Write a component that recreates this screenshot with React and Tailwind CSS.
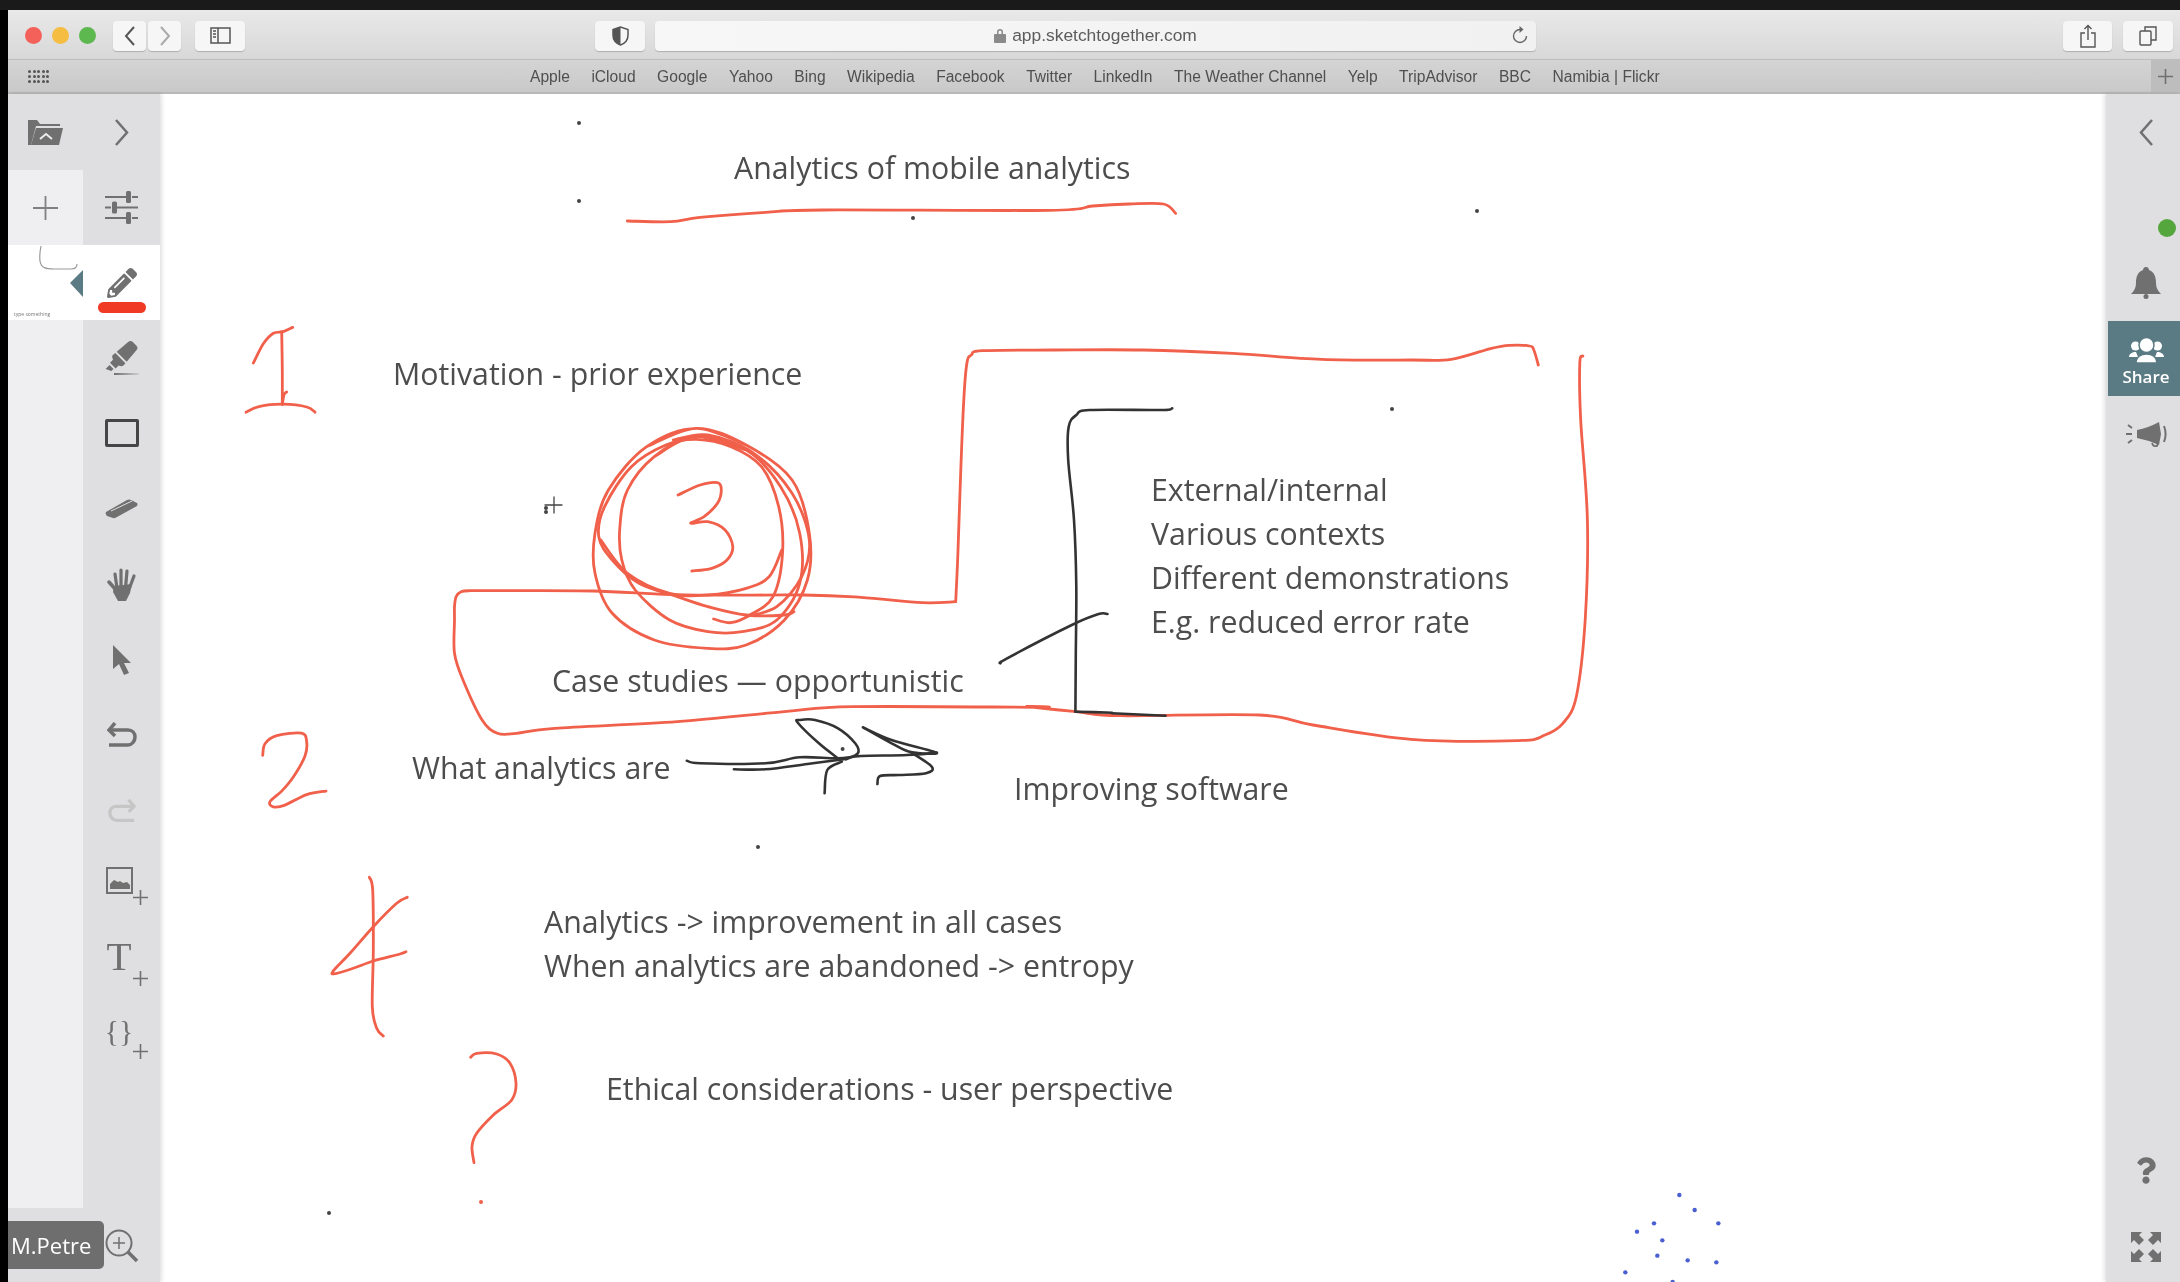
import { FaHighlighter, FaPencilAlt, FaQuestion } from "react-icons/fa"

const bookmarks = ["Apple", "iCloud", "Google", "Yahoo", "Bing", "Wikipedia", "Facebook", "Twitter", "LinkedIn", "The Weather Channel", "Yelp", "TripAdvisor", "BBC", "Namibia | Flickr"]

// the crops the strokes were read from have their own scale
const z5 = pts => pts.map(([x, y]) => [440 + x / 2.613, 320 + y / 3])
const z6 = pts => pts.map(([x, y]) => [920 + x / 2.24, 320 + y / 3])
const z8 = pts => pts.map(([x, y]) => [220 + x / 3, 300 + y / 2.851])
const z9 = pts => pts.map(([x, y]) => [300 + x / 3, 850 + y / 3])
const z11 = pts => pts.map(([x, y]) => [620 + x / 2.75, 130 + y / 3])

// catmull-rom through the points
function smooth(pts) {
  let d = `M${pts[0][0].toFixed(1)} ${pts[0][1].toFixed(1)}`
  for (let i = 0; i < pts.length - 1; i++) {
    const p0 = pts[i - 1] || pts[i]
    const p1 = pts[i]
    const p2 = pts[i + 1]
    const p3 = pts[i + 2] || p2
    const c1x = p1[0] + (p2[0] - p0[0]) / 6
    const c1y = p1[1] + (p2[1] - p0[1]) / 6
    const c2x = p2[0] - (p3[0] - p1[0]) / 6
    const c2y = p2[1] - (p3[1] - p1[1]) / 6
    d += `C${c1x.toFixed(1)} ${c1y.toFixed(1)} ${c2x.toFixed(1)} ${c2y.toFixed(1)} ${p2[0].toFixed(1)} ${p2[1].toFixed(1)}`
  }
  return d
}

const redStrokes = [
  z11([[20, 273], [140, 275], [220, 262], [400, 247], [560, 240], [1180, 241], [1300, 228], [1400, 222], [1495, 222], [1528, 250]]),
  // the big outline, broken at its one sharp corner
  z6([[1385, 135], [1375, 90], [1365, 78], [1320, 76], [1280, 85], [1190, 118], [1100, 120], [900, 118], [700, 100], [500, 90], [300, 90], [140, 92], [115, 105], [105, 130], [98, 240], [90, 500], [85, 700], [80, 845]]),
  [...z6([[80, 845]]),
    ...z5([[1260, 848], [1100, 832], [950, 825], [640, 825], [400, 813], [150, 812], [80, 812], [55, 815], [42, 830], [38, 860], [38, 900], [38, 1000], [60, 1080], [110, 1200], [150, 1240], [200, 1240], [300, 1225], [620, 1205], [900, 1175], [1080, 1160], [1568, 1162]]),
    ...z6([[240, 1160], [350, 1175], [450, 1187], [760, 1185], [880, 1215], [1100, 1258], [1340, 1262], [1400, 1245], [1440, 1210], [1470, 1130], [1490, 900], [1495, 600], [1480, 300], [1478, 130], [1485, 108]])],
  // scribble round the 3, loops run on past their start so they close smoothly
  z5([[540, 380], [670, 325], [800, 375], [920, 480], [965, 640], [960, 780], [900, 900], [800, 975], [700, 985], [560, 960], [450, 880], [405, 760], [405, 640], [440, 510], [540, 380], [670, 325], [800, 375]]),
  z5([[560, 410], [665, 350], [800, 390], [890, 500], [940, 640], [940, 790], [880, 900], [790, 935], [700, 935], [600, 900], [510, 810], [475, 720], [470, 620], [490, 510], [560, 410], [665, 350], [800, 390]]),
  z5([[715, 897], [760, 908], [810, 885], [870, 830], [895, 700], [885, 560], [840, 440], [760, 380], [670, 358], [590, 375], [500, 440], [430, 560], [415, 650], [450, 720], [520, 790], [620, 830], [700, 860], [800, 885], [900, 885], [925, 875]]),
  z5([[420, 660], [490, 760], [600, 820], [700, 825], [800, 805], [860, 770], [893, 690]]),
  z5([[610, 360], [700, 345], [820, 400], [920, 520], [965, 660], [945, 770], [880, 860], [800, 890]]),
  z5([[622, 525], [680, 495], [725, 488], [735, 510], [725, 550], [690, 590], [655, 610], [700, 605], [745, 630], [765, 680], [750, 720], [710, 745], [658, 753]]),
  z8([[100, 180], [130, 125], [160, 95], [190, 90], [218, 78]]),
  z8([[185, 90], [187, 200], [187, 298]]),
  z8([[187, 298], [192, 270], [200, 262]]),
  z8([[78, 320], [120, 303], [190, 297], [260, 305], [285, 320]]),
  z8([[128, 1298], [135, 1265], [170, 1242], [245, 1235], [260, 1260], [255, 1300], [220, 1360], [185, 1400], [150, 1430], [160, 1445], [195, 1440], [260, 1410], [318, 1400]]),
  z9([[208, 82], [218, 120], [220, 300], [217, 470], [230, 535], [250, 558]]),
  z9([[322, 142], [290, 160], [220, 230], [150, 310], [98, 365], [110, 370], [160, 355], [220, 333], [300, 312], [318, 305]]),
  z9([[512, 622], [530, 610], [590, 612], [630, 640], [648, 700], [635, 750], [580, 795], [530, 850], [516, 890], [522, 938]]),
]

const blackStrokes = [
  z6([[565, 265], [540, 270], [380, 270], [350, 285], [333, 320], [332, 420], [345, 600], [350, 800], [349, 1000], [348, 1175]]),
  z6([[348, 1175], [430, 1178]]),
  z6([[430, 1180], [550, 1187]]),
  z6([[180, 1030], [195, 1015], [340, 915], [400, 882], [420, 882]]),
  z5([[645, 1322], [680, 1330], [850, 1330], [940, 1312], [1040, 1315], [1100, 1308], [1220, 1305], [1298, 1298]]),
  z5([[768, 1348], [850, 1348], [960, 1332], [1055, 1318]]),
  z5([[1040, 1315], [990, 1270], [935, 1208], [940, 1200], [980, 1200], [1040, 1225], [1085, 1270], [1092, 1300], [1060, 1318]]),
  z5([[1105, 1222], [1180, 1260], [1298, 1298], [1230, 1296], [1180, 1270], [1105, 1222]]),
  z5([[1230, 1296], [1285, 1340], [1270, 1360], [1200, 1365], [1150, 1368], [1143, 1392]]),
  z5([[1050, 1325], [1012, 1350], [1005, 1420]]),
]

const blueDots = [[298, 105], [344, 150], [222, 190], [415, 190], [171, 215], [247, 241], [232, 287], [323, 301], [409, 307], [136, 337], [278, 366]]
const darkDots = [[579, 123], [579, 201], [1477, 211], [1392, 409], [913, 218], [758, 847], [329, 1213], [546, 512], [546, 508], [842.6, 749]]

function Plus({ className }) {
  return (
    <svg viewBox="0 0 15 15" className={className} fill="none" stroke="#707070" strokeWidth="1.6">
      <path d="M7.5 0v15M0 7.5h15" />
    </svg>
  )
}

function ToolbarButton({ className, children }) {
  return (
    <div className={`h-[30px] rounded-[4px] bg-[#f6f6f6] shadow-[0_1px_1px_rgba(0,0,0,0.2)] flex items-center justify-center ${className}`}>
      {children}
    </div>
  )
}

function Toolbar() {
  return (
    <div className="h-[50px] shrink-0 flex items-center pt-[2px] pl-[17px] pr-[7px] bg-gradient-to-b from-[#e9e9e9] to-[#d8d8d8] border-b border-[#bdbdbd]">
      <div className="flex gap-[10px]">
        <div className="w-[17px] h-[17px] rounded-full bg-[#f4605a]" />
        <div className="w-[17px] h-[17px] rounded-full bg-[#f5bd42]" />
        <div className="w-[17px] h-[17px] rounded-full bg-[#5cb84f]" />
      </div>
      <ToolbarButton className="w-[33px] ml-[17px]">
        <svg width="12" height="20" viewBox="0 0 12 20" fill="none" stroke="#555" strokeWidth="2"><path d="M10 1 2 10l8 9" /></svg>
      </ToolbarButton>
      <ToolbarButton className="w-[33px] ml-[2px]">
        <svg width="12" height="20" viewBox="0 0 12 20" fill="none" stroke="#aaa" strokeWidth="2"><path d="m2 1 8 9-8 9" /></svg>
      </ToolbarButton>
      <ToolbarButton className="w-[50px] ml-[14px]">
        <svg width="21" height="17" viewBox="0 0 21 17" fill="none" stroke="#555" strokeWidth="1.5">
          <rect x="1" y="1" width="19" height="15" />
          <path d="M8 1v15M3 4h3M3 7h3M3 10h3" />
        </svg>
      </ToolbarButton>
      <ToolbarButton className="w-[50px] ml-[350px]">
        <svg width="17" height="20" viewBox="0 0 17 20">
          <path d="M8.5 1 1 3.5V9c0 5 3.5 8.500 7.500 10 4-1.500 7.500-5 7.500-10V3.500z" fill="#f6f6f6" stroke="#555" strokeWidth="1.500" />
          <path d="M8.500 1 1 3.500V9c0 5 3.500 8.500 7.500 10z" fill="#555" />
        </svg>
      </ToolbarButton>
      <ToolbarButton className="w-[881px] ml-[10px] relative bg-gradient-to-r from-[#f7f7f7] to-[#f1f1f1]">
        <svg width="12" height="15" viewBox="0 0 12 15" className="mr-[6px]" fill="#8a8a8a">
          <path d="M3 6V4a3 3 0 0 1 6 0v2h-1.500V4a1.500 1.500 0 0 0-3 0v2z" />
          <rect y="6" width="12" height="9" rx="1" />
        </svg>
        <span className="font-['Liberation_Sans',sans-serif] text-[17.4px] text-[#5c5c5c]">app.sketchtogether.com</span>
        <svg width="16" height="20" viewBox="0 0 16 20" className="absolute right-[8px] top-[4px]" fill="none" stroke="#666" strokeWidth="1.400">
          <path d="M8 4.500A6.500 6.500 0 1 0 14.500 11" />
          <path d="m7.500 1 4 3.500-4 3.500z" fill="#666" stroke="none" />
        </svg>
      </ToolbarButton>
      <ToolbarButton className="w-[49px] ml-auto">
        <svg width="16" height="24" viewBox="0 0 16 24" fill="none" stroke="#555" strokeWidth="1.400">
          <path d="M5 9H1v14h14V9h-4M8 16V2M4.500 5 8 1.500 11.500 5" />
        </svg>
      </ToolbarButton>
      <ToolbarButton className="w-[50px] ml-[11px]">
        <svg width="18" height="20" viewBox="0 0 18 20" fill="none" stroke="#555" strokeWidth="1.400">
          <rect x="1" y="5" width="11" height="14" rx="1" />
          <path d="M6 5V1h11v13h-5" />
        </svg>
      </ToolbarButton>
    </div>
  )
}

function BookmarksBar() {
  return (
    <div className="h-[34px] shrink-0 flex items-center pl-[20px] bg-gradient-to-b from-[#d4d4d4] to-[#c9c9c9] border-b-2 border-[#b9b9b9]">
      <div className="w-[21px] grid grid-cols-5 gap-x-[1.500px] gap-y-[2px]">
        {Array.from({ length: 15 }).map((_, i) => <div key={i} className="h-[3px] bg-[#555] rounded-full" />)}
      </div>
      <div className="flex gap-[21.500px] ml-[481px] pt-[2px] font-['Liberation_Sans',sans-serif] text-[15.6px] text-[#4f4f4f] whitespace-nowrap">
        {bookmarks.map(b => <span key={b}>{b}</span>)}
      </div>
      <div className="ml-auto w-[29px] h-full bg-[#bdbdbd] flex items-center justify-center">
        <Plus className="w-[15px] h-[15px]" />
      </div>
    </div>
  )
}

function ToolRow({ children, offset }) {
  return <div className={`h-[75.500px] flex items-center ${offset ? "pl-[22px]" : "justify-center"}`}>{children}</div>
}

// icon with the little plus at its lower right
function ToolPlus({ children }) {
  return (
    <div className="flex items-end -translate-y-[6px]">
      <div className="w-[28px] flex justify-center">{children}</div>
      <Plus className="w-[15px] h-[15px] -mb-[11px]" />
    </div>
  )
}

function LeftRail() {
  return (
    <aside className="relative z-10 w-[152px] shrink-0 flex flex-col bg-[#dfdee0] shadow-[2px_0_4px_rgba(0,0,0,0.12)]">
      <div className="h-[76px] flex">
        <div className="w-[75px] flex items-center justify-center">
          <svg width="35" height="25" viewBox="0 0 35 25" fill="#707070">
            <path d="M0 0h9l3 4h20v2H8L3 25H0z" />
            <path d="M8 8h27l-4 17H3z" />
            <path d="m12 19 6-5 6 5" fill="none" stroke="#eee" strokeWidth="1.800" />
          </svg>
        </div>
        <div className="flex-1 flex items-center justify-center">
          <svg width="15" height="27" viewBox="0 0 15 27" fill="none" stroke="#707070" strokeWidth="2.500"><path d="m2 1 11 12.500L2 26" /></svg>
        </div>
      </div>
      <div className="h-[75px] flex">
        <div className="w-[75px] bg-[#efeef0] flex items-center justify-center">
          <svg width="25" height="24" viewBox="0 0 25 24" fill="none" stroke="#808080" strokeWidth="1.800"><path d="M12.500 0v24M0 12h25" /></svg>
        </div>
        <div className="flex-1 flex items-center justify-center">
          <svg width="33" height="33" viewBox="0 0 33 33" fill="#707070">
            <path d="M0 5h21v2H0zM27 5h6v2h-6zM0 15.500h6v2H0zM12 15.500h21v2H12zM0 26h21v2H0zM27 26h6v2h-6z" />
            <rect x="21" y="0" width="5" height="12" rx="1.500" />
            <rect x="7" y="10.500" width="5" height="12" rx="1.500" />
            <rect x="21" y="21" width="5" height="12" rx="1.500" />
          </svg>
        </div>
      </div>
      <div className="relative h-[75px] bg-white flex">
        <div className="w-[75px]">
          <svg width="75" height="75" viewBox="0 0 75 75" fill="none" className="absolute left-0 top-0">
            <path d="M33 1c-1 5-1.500 11-1 15 1 7 6 8 14 8h17c4 0 6-2 6-5" stroke="#9a9a9a" strokeWidth="1.200" />
            <path d="M75 25v27L62 38z" fill="#5b7b84" />
          </svg>
          <span className="absolute left-[6px] top-[66px] text-[5px] leading-[6px] text-[#777] font-['Open_Sans',sans-serif]">type something</span>
        </div>
        <div className="flex-1 flex flex-col items-center pt-[23px]">
          <FaPencilAlt className="w-[30px] h-[30px] text-[#707070]" />
          <div className="w-[48px] h-[11px] mt-[4px] rounded-full bg-[#f03a24]" />
        </div>
      </div>
      <div className="flex-1 min-h-0 flex">
        <div className="w-[75px] bg-[#efeef0]" />
        <div className="flex-1">
          <ToolRow>
            <div className="relative w-[35px] h-[34px]">
              <FaHighlighter className="w-[35px] h-[30px] text-[#707070]" />
              <div className="absolute left-[10px] bottom-0 w-[25px] h-[2px] bg-gradient-to-r from-[#707070] to-[#cfcfcf]" />
            </div>
          </ToolRow>
          <ToolRow><div className="w-[34px] h-[28px] border-[3px] border-[#454545] rounded-[2px]" /></ToolRow>
          <ToolRow>
            <svg width="33" height="21" viewBox="0 0 33 21">
              <path d="M1 14 22 2q2-1 4 0l6 3q1 1 0 3L12 19q-2 1.500-4 1l-6-2q-2-2-1-4z" fill="#707070" />
              <path d="m6 13 21-10" stroke="#dfdee0" strokeWidth="1" />
            </svg>
          </ToolRow>
          <ToolRow>
            <svg width="30" height="33" viewBox="0 0 30 33" fill="#707070" stroke="#707070" strokeLinecap="round">
              <path d="M7 18 25 16 23 25 19 33H11L6 24z" stroke="none" />
              <path d="M2 14 9 22" strokeWidth="3.500" fill="none" />
              <path d="M10 20 8 6M14 20V2M18.500 20 20 3M22.500 20 27 8" strokeWidth="3.200" fill="none" />
            </svg>
          </ToolRow>
          <ToolRow>
            <svg width="18" height="30" viewBox="0 0 18 30" fill="#707070"><path d="M0 0v24l6-5 5 11 5-2-5-10h7z" /></svg>
          </ToolRow>
          <ToolRow>
            <svg width="30" height="26" viewBox="0 0 30 26" fill="none" stroke="#707070" strokeWidth="3.500">
              <path d="M3 8h18c4 0 7 3 7 7s-3 8-7 8H2" />
              <path d="M8 1 2 8l6 6" />
            </svg>
          </ToolRow>
          <ToolRow>
            <svg width="28" height="26" viewBox="0 0 30 26" fill="none" stroke="#c6c6c6" strokeWidth="3.500">
              <path d="M27 8H9c-4 0-7 3-7 7s3 8 7 8h19" />
              <path d="m22 1 6 7-6 6" />
            </svg>
          </ToolRow>
          <ToolRow offset>
            <ToolPlus>
              <svg width="27" height="27" viewBox="0 0 27 27" fill="#707070">
                <path d="M0 0h27v27H0zM2 2v23h23V2z" fillRule="evenodd" />
                <path d="M4 22v-5l4-4 4 2 2-1 3 2 4-1 3 3v4z" />
              </svg>
            </ToolPlus>
          </ToolRow>
          <ToolRow offset>
            <ToolPlus>
              <span className="font-['Liberation_Serif',serif] text-[41px] leading-[38px] text-[#707070]">T</span>
            </ToolPlus>
          </ToolRow>
          <ToolRow offset>
            <ToolPlus>
              <span className="font-['Liberation_Serif',serif] text-[30px] leading-[34px] text-[#707070]">{"{}"}</span>
            </ToolPlus>
          </ToolRow>
        </div>
      </div>
      <div className="h-[74px] shrink-0 flex items-center">
        <div className="w-[96px] h-[48px] rounded-r-[5px] bg-[#6e6e6e] flex items-center pl-[3px] font-['Open_Sans',sans-serif] text-[22px] text-white">M.Petre</div>
        <svg width="34" height="34" viewBox="0 0 34 34" fill="none" stroke="#707070" className="ml-[1px] mt-[2px]">
          <circle cx="14" cy="14" r="12.500" strokeWidth="2" />
          <path d="M14 8v12M8 14h12" strokeWidth="1.500" />
          <path d="m23 23 9 9" strokeWidth="3.500" />
        </svg>
      </div>
    </aside>
  )
}

function RightRail() {
  return (
    <aside className="relative z-10 w-[74px] shrink-0 flex flex-col items-center pl-[6px] bg-[#dfdee0] shadow-[-2px_0_4px_rgba(0,0,0,0.12)]">
      <div className="h-[76px] shrink-0 flex items-center">
        <svg width="15" height="27" viewBox="0 0 15 27" fill="none" stroke="#707070" strokeWidth="2.500"><path d="M13 1 2 13.500 13 26" /></svg>
      </div>
      <div className="w-[18px] h-[18px] mt-[49px] self-end mr-[4px] rounded-full bg-[#55a63c]" />
      <svg width="30" height="32" viewBox="0 0 30 32" className="mt-[30px]" fill="#707070">
        <path d="M15 0c2 0 3 1.500 3 3 6 2 7 8 7 13 0 5 2 8 5 11H0c3-3 5-6 5-11 0-5 1-11 7-13 0-1.500 1-3 3-3z" />
        <circle cx="15" cy="29.500" r="2.500" />
      </svg>
      <div className="w-[72px] h-[75px] self-end mt-[22px] bg-[#5b7b84] flex flex-col items-center pt-[16px] pl-[4px] font-['Open_Sans',sans-serif] font-semibold text-[17px] leading-[22px] text-white">
        <svg width="35" height="26" viewBox="0 0 35 26" fill="#fff">
          <circle cx="6.500" cy="9" r="4.500" />
          <circle cx="28.500" cy="9" r="4.500" />
          <path d="M0 20c0-3 3-5 7-5l2 5zM35 20c0-3-3-5-7-5l-2 5z" />
          <circle cx="17.500" cy="8" r="7.500" stroke="#5b7b84" strokeWidth="1.500" />
          <path d="M7 26c0-6 5-9 10.500-9S28 20 28 26z" stroke="#5b7b84" strokeWidth="1.500" />
        </svg>
        <span className="mt-[3px]">Share</span>
      </div>
      <svg width="41" height="25" viewBox="0 0 41 25" className="mt-[26px]" fill="#707070">
        <path d="M11 8Q22 6 33 0l2 12-2 11q-11-5-22-7z" />
        <path d="M26 21q1 4 5 3l1-3" fill="none" stroke="#707070" strokeWidth="1.800" />
        <path d="M38 4c2 5 2 11 0 16" fill="none" stroke="#707070" strokeWidth="2" />
        <path d="m2 3 4 3M0 12h6M2 21l4-3" stroke="#707070" strokeWidth="2" />
      </svg>
      <FaQuestion className="w-[20px] h-[35px] mt-auto text-[#707070]" />
      <svg width="30" height="30" viewBox="0 0 30 30" className="mt-[44px] mb-[20px]" fill="#707070">
        <path d="M0 0h11L8 3l5 5-5 5-5-5-3 3zM30 0v11l-3-3-5 5-5-5 5-5-3-3zM0 30V19l3 3 5-5 5 5-5 5 3 3zM30 30H19l3-3-5-5 5-5 5 5 3-3z" />
      </svg>
    </aside>
  )
}

function Note({ className, children }) {
  return <div className={`absolute whitespace-pre text-[30.3px] leading-[44px] text-[#4d4d4d] font-['Open_Sans',sans-serif] ${className}`}>{children}</div>
}

function Canvas() {
  return (
    <main className="relative flex-1 min-w-0 bg-white overflow-hidden">
      <svg viewBox="160 94 1946 1188" className="absolute inset-0 w-full h-full" fill="none" strokeLinecap="round" strokeLinejoin="round">
        {redStrokes.map((pts, i) => <path key={i} d={smooth(pts)} stroke="#f0604a" strokeWidth="2.800" />)}
        {blackStrokes.map((pts, i) => <path key={i} d={smooth(pts)} stroke="#333" strokeWidth="2.600" />)}
        {darkDots.map(([x, y], i) => <circle key={i} cx={x} cy={y} r="2" fill="#444" />)}
        <circle cx="481" cy="1202" r="2" fill="#f0604a" />
        {blueDots.map(([x, y], i) => <circle key={i} cx={1580 + x / 3} cy={1160 + y / 3} r="2.200" fill="#4a5fd0" />)}
        <path d="M554 497v16M545 505h17" stroke="#444" strokeWidth="1.300" />
      </svg>
      <Note className="left-[574px] top-[52px]">Analytics of mobile analytics</Note>
      <Note className="left-[233px] top-[258px]">Motivation - prior experience</Note>
      <Note className="left-[991px] top-[374px]">{"External/internal\nVarious contexts\nDifferent demonstrations\nE.g. reduced error rate"}</Note>
      <Note className="left-[392px] top-[565px]">Case studies — opportunistic</Note>
      <Note className="left-[252px] top-[652px]">What analytics are</Note>
      <Note className="left-[854px] top-[673px]">Improving software</Note>
      <Note className="left-[384px] top-[806px]">{"Analytics -> improvement in all cases\nWhen analytics are abandoned -> entropy"}</Note>
      <Note className="left-[446px] top-[973px]">Ethical considerations - user perspective</Note>
    </main>
  )
}

export default function App() {
  return (
    <div className="h-screen flex flex-col overflow-hidden bg-black blur-[0.5px]">
      <div className="h-[10px] shrink-0 bg-[#1a1a1a]" />
      <div className="flex-1 min-h-0 ml-[8px] flex flex-col">
        <Toolbar />
        <BookmarksBar />
        <div className="flex-1 min-h-0 flex">
          <LeftRail />
          <Canvas />
          <RightRail />
        </div>
      </div>
    </div>
  )
}
